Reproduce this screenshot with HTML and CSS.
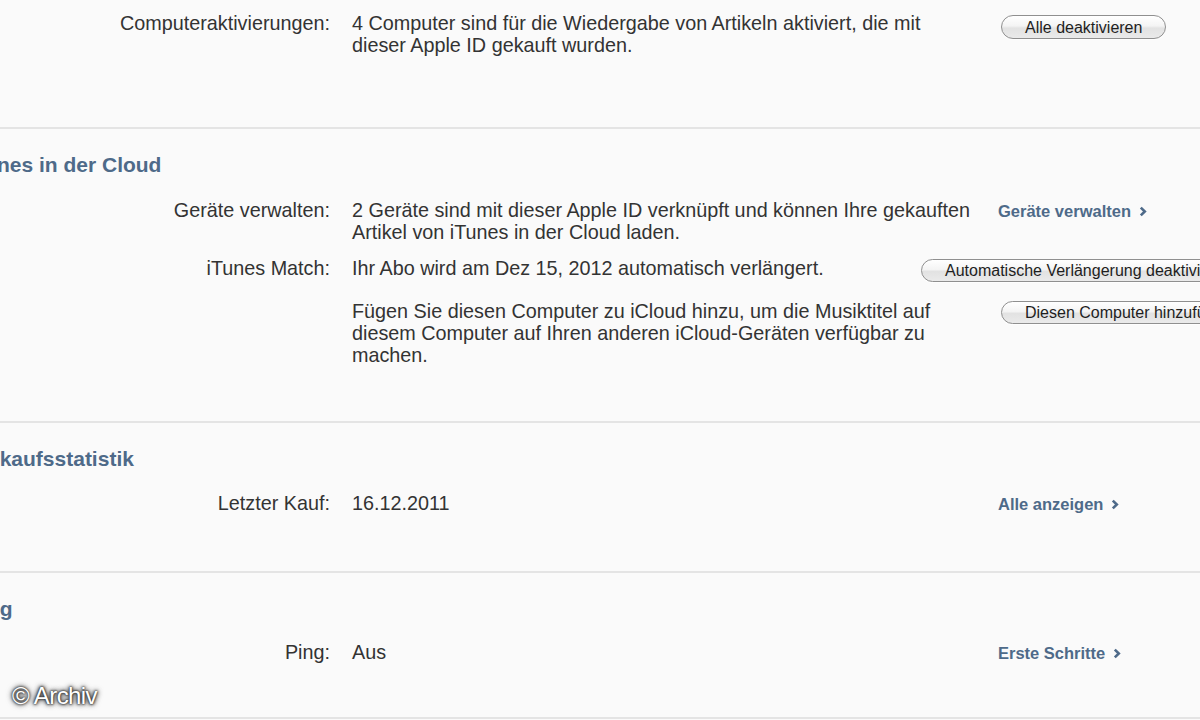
FILE: index.html
```html
<!DOCTYPE html>
<html lang="de">
<head>
<meta charset="utf-8">
<title>Account-Informationen</title>
<link rel="stylesheet" href="styles.css">
</head>
<body>
<main class="page">
  <section class="section first">
    <div class="row">
      <div class="label">Computeraktivierungen:</div>
      <div class="value">4 Computer sind für die Wiedergabe von Artikeln aktiviert, die mit<br>dieser Apple ID gekauft wurden.</div>
      <div class="action"><button class="btn btn-top">Alle deaktivieren</button></div>
    </div>
  </section>

  <section class="section cloud">
    <h2 class="heading">iTunes in der Cloud</h2>
    <div class="row">
      <div class="label">Geräte verwalten:</div>
      <div class="value">2 Geräte sind mit dieser Apple ID verknüpft und können Ihre gekauften<br>Artikel von iTunes in der Cloud laden.</div>
      <div class="action"><a class="link">Geräte verwalten <svg class="chev" viewBox="0 0 8 11" width="8" height="11"><polyline points="1.8,1.6 5.8,5.5 1.8,9.4" fill="none" stroke="currentColor" stroke-width="2.6"/></svg></a></div>
    </div>
    <div class="row row-match">
      <div class="label">iTunes Match:</div>
      <div class="value">Ihr Abo wird am Dez 15, 2012 automatisch verlängert.</div>
      <div class="action"><button class="btn btn-wide">Automatische Verlängerung deaktivieren</button></div>
    </div>
    <div class="row row-add">
      <div class="label"></div>
      <div class="value">Fügen Sie diesen Computer zu iCloud hinzu, um die Musiktitel auf<br>diesem Computer auf Ihren anderen iCloud-Geräten verfügbar zu<br>machen.</div>
      <div class="action"><button class="btn btn-add">Diesen Computer hinzufügen</button></div>
    </div>
  </section>

  <section class="section stats">
    <h2 class="heading">Einkaufsstatistik</h2>
    <div class="row">
      <div class="label">Letzter Kauf:</div>
      <div class="value">16.12.2011</div>
      <div class="action"><a class="link">Alle anzeigen <svg class="chev" viewBox="0 0 8 11" width="8" height="11"><polyline points="1.8,1.6 5.8,5.5 1.8,9.4" fill="none" stroke="currentColor" stroke-width="2.6"/></svg></a></div>
    </div>
  </section>

  <section class="section ping">
    <h2 class="heading">Ping</h2>
    <div class="row">
      <div class="label">Ping:</div>
      <div class="value">Aus</div>
      <div class="action"><a class="link">Erste Schritte <svg class="chev" viewBox="0 0 8 11" width="8" height="11"><polyline points="1.8,1.6 5.8,5.5 1.8,9.4" fill="none" stroke="currentColor" stroke-width="2.6"/></svg></a></div>
    </div>
  </section>
</main>
<div class="watermark">© Archiv</div>
</body>
</html>
```

FILE: styles.css
```css
html, body {
  margin: 0;
  padding: 0;
}
body {
  width: 1200px;
  height: 720px;
  overflow: hidden;
  background: #fafafa;
  font-family: "Liberation Sans", Arial, Helvetica, sans-serif;
  font-size: 19.8px;
  line-height: 22px;
  color: #333;
  position: relative;
}
.page {
  display: flex;
  flex-direction: column;
}
.section {
  border-top: 2px solid #e4e4e4;
  padding-top: 23px;
}
.section.first {
  border-top: none;
  padding-top: 12px;
  padding-bottom: 71px;
}
.section.cloud {
  padding-bottom: 55px;
}
.section.stats {
  padding-bottom: 56px;
}
.section.ping {
  padding-bottom: 53px;
  border-bottom: 2px solid #e4e4e4;
}
.heading {
  margin: 0 0 21px -33px;
  font-size: 21px;
  line-height: 26px;
  font-weight: bold;
  color: #4e6a89;
}
.stats .heading { margin-bottom: 20px; }
.ping .heading { margin-bottom: 19px; }

.row {
  display: grid;
  grid-template-columns: 330px 624px 1fr;
  column-gap: 22px;
  align-items: start;
}
.row + .row {
  margin-top: 14px;
}
.row.row-add {
  margin-top: 18px;
}
.label {
  text-align: right;
  white-space: nowrap;
}
.value {
  white-space: nowrap;
}
.action {
  white-space: nowrap;
  min-width: 0;
}
.btn {
  display: inline-block;
  height: 23px;
  margin: 2px 0 0 3px;
  padding: 0 23px;
  border: 1px solid #8f8f8f;
  border-radius: 12px;
  background: linear-gradient(#ffffff 0%, #f4f4f4 45%, #e2e2e2 55%, #eaeaea 100%);
  font-family: "Liberation Sans", Arial, Helvetica, sans-serif;
  font-size: 16px;
  line-height: 21px;
  color: #1e1e1e;
  box-sizing: border-box;
  box-shadow: 0 1px 0 rgba(255,255,255,0.8);
}
.btn-top {
  height: 24px;
  margin-top: 3px;
}
.btn-wide {
  margin-left: -77px;
}
.btn-add {
  margin-top: 1px;
}
.link {
  display: inline-flex;
  align-items: center;
  gap: 8px;
  font-size: 16.5px;
  font-weight: bold;
  color: #4e6a89;
  text-decoration: none;
}
.chev {
  display: block;
  margin-top: 1px;
}
.watermark {
  position: absolute;
  left: 12px;
  top: 683px;
  font-size: 24px;
  line-height: 26px;
  color: #fff;
  letter-spacing: -0.6px;
  text-shadow: 0 0 2px #222, 0 0 3px #333, 0 0 5px #444, 0 0 6px #666;
}
```
